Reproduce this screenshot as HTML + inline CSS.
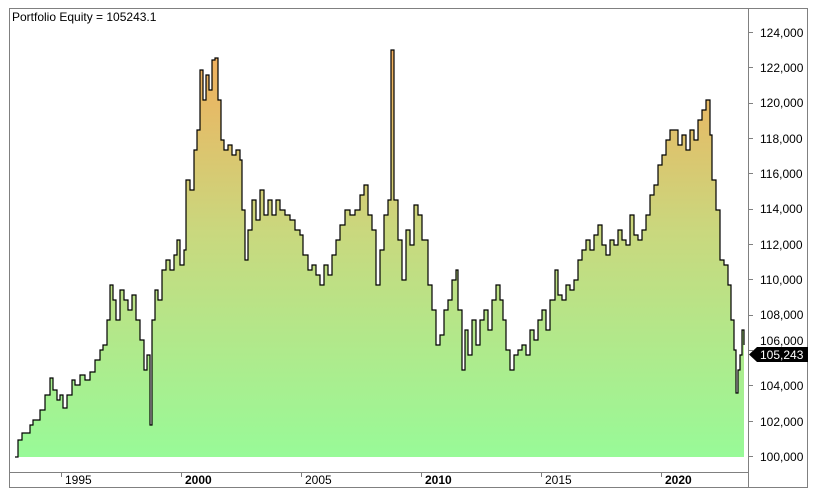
<!DOCTYPE html>
<html><head><meta charset="utf-8"><style>
html,body{margin:0;padding:0;background:#fff;width:818px;height:496px;overflow:hidden;font-family:"Liberation Sans",Arial,sans-serif}
svg{position:absolute;left:0;top:0}
</style></head><body>
<svg width="818" height="496" viewBox="0 0 818 496">
<defs>
<linearGradient id="g" x1="0" y1="50" x2="0" y2="457" gradientUnits="userSpaceOnUse">
<stop offset="0" stop-color="#f2ae5c"/>
<stop offset="0.45" stop-color="#c9d87e"/>
<stop offset="1" stop-color="#98fa98"/>
</linearGradient>
</defs>
<rect x="9.5" y="8.5" width="798" height="479" fill="#fff" stroke="#808080"/>
<line x1="748.5" y1="8" x2="748.5" y2="487" stroke="#808080"/>
<line x1="9" y1="472.5" x2="748" y2="472.5" stroke="#808080"/>
<path id="d" fill="url(#g)" d="M15 457 H18 V440 H22 V433 H30 V425 H33 V420 H40 V410 H45 V395 H50 V378 H53 V390 H57 V400 H60 V395 H63 V408 H67 V395 H72 V380 H75 V385 H80 V375 H85 V380 H90 V372 H95 V360 H100 V350 H103 V345 H107 V320 H110 V285 H113 V300 H116 V320 H120 V290 H124 V300 H128 V310 H132 V295 H136 V320 H140 V340 H144 V370 H147 V355 H150 V425 H152 V320 H155 V290 H158 V300 H162 V270 H166 V260 H170 V270 H174 V255 H177 V240 H180 V265 H184 V250 H186 V180 H190 V190 H194 V150 H197 V130 H200 V70 H203 V100 H206 V75 H209 V90 H212 V60 H215 V58 H218 V100 H221 V140 H224 V150 H228 V145 H232 V155 H236 V150 H240 V160 H242 V210 H245 V260 H248 V230 H252 V200 H256 V220 H260 V190 H264 V215 H268 V200 H272 V215 H276 V200 H280 V210 H285 V215 H290 V220 H295 V230 H300 V235 H303 V255 H308 V270 H312 V265 H316 V275 H320 V285 H324 V265 H328 V275 H332 V255 H336 V240 H340 V225 H345 V210 H350 V215 H355 V210 H360 V195 H364 V185 H368 V215 H372 V230 H376 V285 H380 V250 H384 V215 H388 V200 H391 V50 H394 V200 H398 V240 H402 V280 H406 V230 H410 V245 H414 V205 H418 V215 H422 V240 H426 V240 H428 V285 H432 V310 H436 V345 H440 V335 H444 V310 H448 V300 H452 V280 H456 V270 H458 V310 H462 V370 H465 V330 H468 V355 H472 V320 H476 V345 H480 V320 H484 V310 H488 V330 H492 V300 H496 V285 H500 V300 H503 V320 H506 V350 H510 V370 H514 V355 H518 V350 H522 V345 H526 V355 H530 V330 H534 V340 H538 V320 H542 V310 H546 V330 H550 V300 H555 V270 H558 V295 H562 V300 H566 V285 H570 V290 H574 V280 H578 V260 H582 V250 H586 V240 H590 V250 H594 V235 H598 V225 H602 V245 H606 V255 H610 V240 H614 V245 H618 V230 H622 V240 H626 V245 H630 V215 H634 V235 H638 V240 H642 V230 H646 V215 H650 V195 H654 V185 H658 V165 H662 V155 H666 V140 H670 V130 H674 V130 H678 V145 H682 V135 H686 V150 H690 V130 H694 V140 H698 V120 H702 V110 H706 V100 H710 V135 H712 V180 H716 V210 H720 V260 H724 V265 H728 V285 H731 V320 H734 V350 H736 V393 H738 V370 H740 V355 H742 V330 H744 V345 V457 Z"/>
<path fill="none" stroke="#000" stroke-width="1.2" d="M15 457 H18 V440 H22 V433 H30 V425 H33 V420 H40 V410 H45 V395 H50 V378 H53 V390 H57 V400 H60 V395 H63 V408 H67 V395 H72 V380 H75 V385 H80 V375 H85 V380 H90 V372 H95 V360 H100 V350 H103 V345 H107 V320 H110 V285 H113 V300 H116 V320 H120 V290 H124 V300 H128 V310 H132 V295 H136 V320 H140 V340 H144 V370 H147 V355 H150 V425 H152 V320 H155 V290 H158 V300 H162 V270 H166 V260 H170 V270 H174 V255 H177 V240 H180 V265 H184 V250 H186 V180 H190 V190 H194 V150 H197 V130 H200 V70 H203 V100 H206 V75 H209 V90 H212 V60 H215 V58 H218 V100 H221 V140 H224 V150 H228 V145 H232 V155 H236 V150 H240 V160 H242 V210 H245 V260 H248 V230 H252 V200 H256 V220 H260 V190 H264 V215 H268 V200 H272 V215 H276 V200 H280 V210 H285 V215 H290 V220 H295 V230 H300 V235 H303 V255 H308 V270 H312 V265 H316 V275 H320 V285 H324 V265 H328 V275 H332 V255 H336 V240 H340 V225 H345 V210 H350 V215 H355 V210 H360 V195 H364 V185 H368 V215 H372 V230 H376 V285 H380 V250 H384 V215 H388 V200 H391 V50 H394 V200 H398 V240 H402 V280 H406 V230 H410 V245 H414 V205 H418 V215 H422 V240 H426 V240 H428 V285 H432 V310 H436 V345 H440 V335 H444 V310 H448 V300 H452 V280 H456 V270 H458 V310 H462 V370 H465 V330 H468 V355 H472 V320 H476 V345 H480 V320 H484 V310 H488 V330 H492 V300 H496 V285 H500 V300 H503 V320 H506 V350 H510 V370 H514 V355 H518 V350 H522 V345 H526 V355 H530 V330 H534 V340 H538 V320 H542 V310 H546 V330 H550 V300 H555 V270 H558 V295 H562 V300 H566 V285 H570 V290 H574 V280 H578 V260 H582 V250 H586 V240 H590 V250 H594 V235 H598 V225 H602 V245 H606 V255 H610 V240 H614 V245 H618 V230 H622 V240 H626 V245 H630 V215 H634 V235 H638 V240 H642 V230 H646 V215 H650 V195 H654 V185 H658 V165 H662 V155 H666 V140 H670 V130 H674 V130 H678 V145 H682 V135 H686 V150 H690 V130 H694 V140 H698 V120 H702 V110 H706 V100 H710 V135 H712 V180 H716 V210 H720 V260 H724 V265 H728 V285 H731 V320 H734 V350 H736 V393 H738 V370 H740 V355 H742 V330 H744 V345"/>
<g stroke="#808080">
<line x1="748" y1="456.5" x2="753" y2="456.5"/><line x1="748" y1="421.5" x2="753" y2="421.5"/><line x1="748" y1="385.5" x2="753" y2="385.5"/><line x1="748" y1="350.5" x2="753" y2="350.5"/><line x1="748" y1="315.5" x2="753" y2="315.5"/><line x1="748" y1="279.5" x2="753" y2="279.5"/><line x1="748" y1="244.5" x2="753" y2="244.5"/><line x1="748" y1="209.5" x2="753" y2="209.5"/><line x1="748" y1="173.5" x2="753" y2="173.5"/><line x1="748" y1="138.5" x2="753" y2="138.5"/><line x1="748" y1="103.5" x2="753" y2="103.5"/><line x1="748" y1="67.5" x2="753" y2="67.5"/><line x1="748" y1="32.5" x2="753" y2="32.5"/>
<line x1="61.5" y1="472" x2="61.5" y2="477"/><line x1="181.5" y1="472" x2="181.5" y2="477"/><line x1="301.5" y1="472" x2="301.5" y2="477"/><line x1="421.5" y1="472" x2="421.5" y2="477"/><line x1="541.5" y1="472" x2="541.5" y2="477"/><line x1="661.5" y1="472" x2="661.5" y2="477"/>
</g>
<g font-size="12" fill="#000" font-family="Liberation Sans, Arial, sans-serif">
<text x="12" y="21">Portfolio Equity = 105243.1</text>
<text x="760" y="461">100,000</text><text x="760" y="426">102,000</text><text x="760" y="390">104,000</text><text x="760" y="319">108,000</text><text x="760" y="284">110,000</text><text x="760" y="249">112,000</text><text x="760" y="213">114,000</text><text x="760" y="178">116,000</text><text x="760" y="143">118,000</text><text x="760" y="107">120,000</text><text x="760" y="72">122,000</text><text x="760" y="37">124,000</text><text x="760" y="345">106,000</text>
<text x="65" y="484">1995</text><text x="185" y="484" font-weight="bold">2000</text><text x="305" y="484">2005</text><text x="425" y="484" font-weight="bold">2010</text><text x="545" y="484">2015</text><text x="665" y="484" font-weight="bold">2020</text>
</g>
<path d="M749 354.5 L757 347 H808 V362 H757 Z" fill="#000"/>
<text x="760" y="359" font-size="12" fill="#fff" font-family="Liberation Sans, Arial, sans-serif">105,243</text>
</svg>
</body></html>
